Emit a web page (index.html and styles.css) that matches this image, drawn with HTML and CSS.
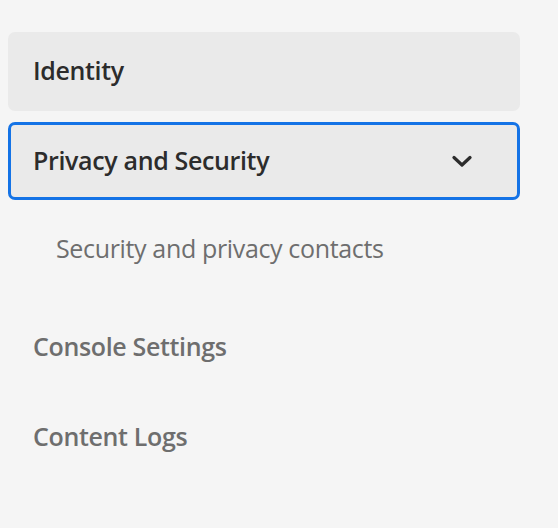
FILE: index.html
```html
<!DOCTYPE html>
<html>
<head>
<meta charset="utf-8">
<link rel="stylesheet" href="styles.css">
</head>
<body>
<nav class="sidenav">
  <div class="item item--selected"><span class="label">Identity</span></div>
  <div class="item item--focused">
    <span class="label">Privacy and Security</span>
    <svg class="chevron" width="20" height="13" viewBox="0 0 20 13"><path d="M2 2.5 L10 10 L18 2.5" fill="none" stroke="#2c2c2c" stroke-width="3.2" stroke-linecap="round" stroke-linejoin="round"/></svg>
  </div>
  <div class="subitem"><span class="sublabel">Security and privacy contacts</span></div>
  <div class="item item--plain"><span class="label">Console Settings</span></div>
  <div class="item item--plain"><span class="label">Content Logs</span></div>
</nav>
</body>
</html>
```
FILE: styles.css
```css
html, body {
  margin: 0;
  padding: 0;
  background: #f5f5f5;
  width: 558px;
  height: 528px;
  overflow: hidden;
}
.sidenav {
  padding: 32px 0 0 8px;
  width: 512px;
  display: flex;
  flex-direction: column;
  font-family: "Open Sans", "Noto Sans", sans-serif;
}
.item {
  height: 79px;
  box-sizing: border-box;
  border-radius: 7px;
  display: flex;
  align-items: center;
  justify-content: space-between;
  padding: 0 48px 0 25px;
}
.item + .item {
  margin-top: 11px;
}
.label {
  font-size: 25px;
  font-weight: 600;
  color: #2c2c2c;
  letter-spacing: -0.35px;
  line-height: 1;
  position: relative;
  top: -1px;
}
.item--selected {
  background: #eaeaea;
}
.item--focused {
  background: #eaeaea;
  border: 3px solid #1473e6;
  padding-left: 22px;
  padding-right: 45px;
  height: 78px;
  margin-top: 12px;
}
.chevron {
  display: block;
}
.subitem {
  height: 96px;
  display: flex;
  align-items: center;
  padding-left: 48px;
}
.sublabel {
  font-size: 25px;
  font-weight: 400;
  color: #6e6e6e;
  letter-spacing: -0.35px;
  line-height: 1;
}
.subitem + .item {
  margin-top: 12px;
}
.item--plain .label {
  color: #6e6e6e;
}
```
